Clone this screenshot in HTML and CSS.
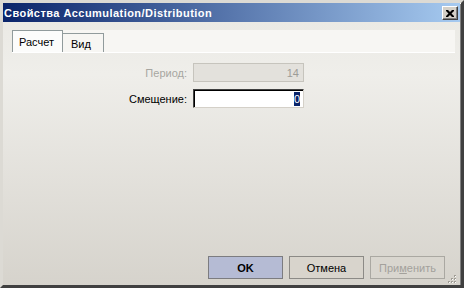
FILE: index.html
```html
<!DOCTYPE html>
<html lang="ru">
<head>
    <meta charset="UTF-8">
    <title>Свойства Accumulation/Distribution</title>
    <link rel="stylesheet" href="styles.css">
</head>
<body>
    <div class="window">
        <div class="titlebar">
            <span class="title">Свойства Accumulation/Distribution</span>
            <button class="close-btn" title="Закрыть">
                <svg width="8" height="7" viewBox="0 0 8 7">
                    <path d="M0 0h2l2 2 2-2h2v1l-2.5 2.5L8 6v1H6L4 5 2 7H0V6l2.5-2.5L0 1z" fill="#000"/>
                </svg>
            </button>
        </div>

        <div class="body">
            <div class="tab-strip">
                <div class="tab active">Расчет</div>
                <div class="tab">Вид</div>
            </div>

            <div class="panel">
                <div class="form-grid">
                    <label class="field-label disabled">Период:</label>
                    <div class="field disabled">14</div>
                    <label class="field-label">Смещение:</label>
                    <div class="field"><span class="selected">0</span></div>
                </div>
            </div>

            <div class="buttons">
                <button class="btn default">OK</button>
                <button class="btn">Отмена</button>
                <button class="btn disabled">При<u>м</u>енить</button>
            </div>

            <!-- size grip -->
            <svg class="grip" width="9" height="9" viewBox="0 0 9 9">
                <rect x="6" y="0" width="2" height="2" fill="#a09d95"/>
                <rect x="3" y="3" width="2" height="2" fill="#a09d95"/>
                <rect x="6" y="3" width="2" height="2" fill="#a09d95"/>
                <rect x="0" y="6" width="2" height="2" fill="#a09d95"/>
                <rect x="3" y="6" width="2" height="2" fill="#a09d95"/>
                <rect x="6" y="6" width="2" height="2" fill="#a09d95"/>
                <rect x="7" y="1" width="1" height="1" fill="#fff"/>
                <rect x="4" y="4" width="1" height="1" fill="#fff"/>
                <rect x="7" y="4" width="1" height="1" fill="#fff"/>
                <rect x="1" y="7" width="1" height="1" fill="#fff"/>
                <rect x="4" y="7" width="1" height="1" fill="#fff"/>
                <rect x="7" y="7" width="1" height="1" fill="#fff"/>
            </svg>
        </div>
    </div>
</body>
</html>
```

FILE: styles.css
```css
html, body {
    margin: 0;
    padding: 0;
}
body {
    font-family: "Liberation Sans", Arial, sans-serif;
    font-size: 11px;
    color: #000;
    background-color: #d4d0c8;
}
.window {
    width: 464px;
    height: 288px;
    box-sizing: border-box;
    display: flex;
    flex-direction: column;
    border-style: solid;
    border-width: 3px 3px 3px 3px;
    border-color: #dcdad4 #404040 #404040 #dcdad4;
    box-shadow: inset 1px 1px 0 #fff, inset -1px -1px 0 #808080;
    background-color: #d4d0c8;
}
.titlebar {
    height: 19px;
    flex: none;
    display: flex;
    align-items: center;
    justify-content: space-between;
    padding: 0 2px 0 1px;
    margin-right: 1px;
    background: linear-gradient(to right, #0a246a, #a6caf0);
}
.title {
    color: #fff;
    font-weight: bold;
    font-size: 11px;
    letter-spacing: 0.45px;
}
.close-btn {
    width: 16px;
    height: 14px;
    padding: 0;
    margin-top: 1px;
    display: flex;
    align-items: center;
    justify-content: center;
    background-color: #d4d0c8;
    border: 1px solid;
    border-color: #fff #404040 #404040 #fff;
    box-shadow: inset -1px -1px 0 #808080;
}
.body {
    position: relative;
    flex: 1;
    display: flex;
    flex-direction: column;
    margin-right: 1px;
    background: linear-gradient(to bottom, #ebeae5 0%, #efeeea 20%, #d6d3cc 100%);
}
.tab-strip {
    display: flex;
    align-items: flex-end;
    height: 22px;
    margin: 8px 5px 0 9px;
    background-color: #f7f6f3;
    border-bottom: 1px solid #fff;
}
.tab {
    height: 19px;
    box-sizing: border-box;
    padding: 4px 8px 0 8px;
    border: 1px solid #919b9c;
    border-bottom: none;
    background-color: #f7f6f3;
}
.tab.active {
    height: 22px;
    width: 51px;
    padding: 5px 0 0 6px;
    background-color: #fcfcfb;
}
.tab:not(.active) {
    width: 41px;
    border-left: none;
}
.panel {
    padding-top: 10px;
}
.form-grid {
    display: grid;
    grid-template-columns: 184px 111px;
    column-gap: 6px;
    row-gap: 7px;
    align-items: center;
}
.field-label {
    text-align: right;
}
.field-label.disabled {
    color: #a7a6a1;
}
.field {
    height: 19px;
    box-sizing: border-box;
    display: flex;
    align-items: center;
    justify-content: flex-end;
    padding-right: 3px;
    background-color: #fff;
    border: 1px solid;
    border-color: #404040 #d4d0c8 #d4d0c8 #404040;
    box-shadow: inset 1px 1px 0 #000;
}
.field.disabled {
    color: #9d9c97;
    background-color: #e3e1dc;
    border-color: #c6c4bd;
    box-shadow: none;
    padding-right: 4px;
}
.selected {
    background-color: #0a246a;
    color: #fff;
    padding: 1px 0;
    line-height: 12px;
}
.buttons {
    margin-top: auto;
    display: flex;
    justify-content: flex-end;
    gap: 6px;
    padding: 0 15px 6px 0;
}
.btn {
    width: 75px;
    height: 23px;
    padding: 0;
    font-family: "Liberation Sans", Arial, sans-serif;
    font-size: 11px;
    color: #000;
    background-color: #d8d4cc;
    border: 1px solid #8c8a86;
}
.btn.default {
    font-weight: bold;
    background-color: #b5bbd4;
    border-color: #7c7c80;
}
.btn.disabled {
    color: #a3a19c;
    border-color: #aaa8a2;
    background-color: #d9d6cf;
}
.grip {
    position: absolute;
    right: 3px;
    bottom: 1px;
}
```
